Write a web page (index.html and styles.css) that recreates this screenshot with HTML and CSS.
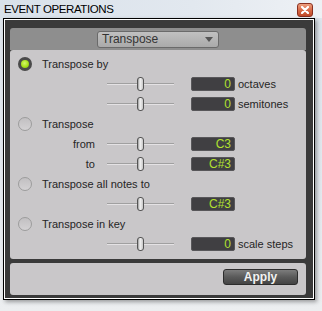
FILE: index.html
```html
<html>
<head>
	<meta http-equiv="Content-Type" content="text/html; charset=utf-8" />
	<title>Event Operations</title>
	<link rel="stylesheet" href="styles.css">
</head>
<body>
	<div class="titlebar">
		<span class="title">EVENT OPERATIONS</span>
		<span class="close">
			<svg width="8" height="8" viewBox="0 0 8 8"><path d="M1 1L7 7M7 1L1 7" stroke="#fff" stroke-width="2.2" stroke-linecap="round"/></svg>
		</span>
	</div>
	<div class="frame">
		<div class="inner">
			<div class="panel">
				<div class="panel-head">
					<div class="select">Transpose<span class="caret"></span></div>
				</div>
				<div class="panel-body">
					<div class="row opt"><span class="radio on"></span><span>Transpose by</span></div>
					<div class="row ctl"><span class="lbl"></span><span class="slider"><i class="thumb"></i></span><span class="val">0</span><span class="unit">octaves</span></div>
					<div class="row ctl"><span class="lbl"></span><span class="slider"><i class="thumb"></i></span><span class="val">0</span><span class="unit">semitones</span></div>
					<div class="row opt"><span class="radio"></span><span>Transpose</span></div>
					<div class="row ctl"><span class="lbl">from</span><span class="slider"><i class="thumb"></i></span><span class="val">C3</span></div>
					<div class="row ctl"><span class="lbl">to</span><span class="slider"><i class="thumb"></i></span><span class="val">C#3</span></div>
					<div class="row opt"><span class="radio"></span><span>Transpose all notes to</span></div>
					<div class="row ctl"><span class="lbl"></span><span class="slider"><i class="thumb"></i></span><span class="val">C#3</span></div>
					<div class="row opt"><span class="radio"></span><span>Transpose in key</span></div>
					<div class="row ctl"><span class="lbl"></span><span class="slider"><i class="thumb"></i></span><span class="val">0</span><span class="unit">scale steps</span></div>
				</div>
			</div>
			<div class="footer">
				<button class="apply">Apply</button>
			</div>
		</div>
	</div>
</body>
</html>
```

FILE: styles.css
```css
body {
	margin: 0;
	font-family: 'Liberation Sans', Arial, sans-serif;
	background: linear-gradient(to bottom, #dde4ec 0, #e3e8ee 60%, #eceef0 100%);
	height: 311px;
	overflow: hidden;
}
.titlebar {
	height: 18px;
	display: flex;
	justify-content: space-between;
	align-items: flex-start;
	background: linear-gradient(to right, #d9e1ea 0, #e2e8ef 60%, #eef1f5 100%);
}
.title {
	margin: 3px 0 0 4px;
	font-size: 11.5px;
	letter-spacing: -0.4px;
	color: #000;
}
.close {
	width: 16px;
	height: 14px;
	margin: 3px 9px 0 0;
	box-sizing: border-box;
	border: 1px solid #8a3020;
	border-radius: 3px;
	background: linear-gradient(to bottom, #eda080 0, #d86a48 50%, #c04a28 100%);
	display: flex;
	align-items: center;
	justify-content: center;
}
.frame {
	width: 312px;
	margin-left: 3px;
	box-sizing: border-box;
	border: 1px solid #000;
	box-shadow: 2px 2px 4px rgba(0, 0, 0, 0.35);
}
.inner {
	border: 1px solid #fff;
	background: #3a3a3a;
	padding: 8px 7px 3px 5px;
}
.panel-head {
	height: 22px;
	background: #8e8e8e;
	border-radius: 3px 3px 0 0;
	display: flex;
	align-items: center;
	justify-content: center;
}
.select {
	width: 122px;
	height: 17px;
	box-sizing: border-box;
	border: 1px solid #6a6a6a;
	border-radius: 3px;
	background: linear-gradient(to bottom, #c0c0c0 0, #aaaaaa 100%);
	color: #333;
	font-size: 12px;
	line-height: 15px;
	padding-left: 4px;
	display: flex;
	justify-content: space-between;
	align-items: center;
}
.caret {
	width: 0;
	height: 0;
	margin-right: 5px;
	border-left: 4px solid transparent;
	border-right: 4px solid transparent;
	border-top: 5px solid #555;
}
.panel-body {
	background: #c9c7c9;
	border-radius: 3px;
	padding: 4px 0 5px 0;
}
.row {
	height: 20px;
	display: flex;
	align-items: center;
	font-size: 11px;
	color: #252525;
}
.opt {
	padding-left: 8px;
	gap: 10px;
}
.radio {
	width: 14px;
	height: 14px;
	box-sizing: border-box;
	border-radius: 50%;
	border: 1px solid #9c9c9c;
	background: linear-gradient(to bottom, #c2c0c2, #d4d2d4);
}
.radio.on {
	border: 3px solid #4a4a4a;
	background: radial-gradient(circle at 45% 40%, #d6f56a 0, #a6e01a 55%, #7fae10 100%);
}
.lbl {
	width: 85px;
	text-align: right;
}
.slider {
	width: 67px;
	height: 20px;
	margin-left: 12px;
	display: flex;
	align-items: center;
	background: linear-gradient(to bottom, transparent 9px, #a0a0a0 9px, #a0a0a0 10px, #e4e2e4 10px, #e4e2e4 11px, transparent 11px);
}
.thumb {
	width: 7px;
	height: 14px;
	margin-left: 30px;
	box-sizing: border-box;
	border: 1px solid #555;
	border-radius: 3px;
	background: linear-gradient(to right, #9a9a9a 0, #f4f4f4 40%, #c8c8c8 100%);
}
.val {
	width: 44px;
	height: 14px;
	margin-left: 17px;
	box-sizing: border-box;
	background: #403f42;
	border: 1px solid #58575a;
	border-radius: 2px;
	color: #b2e030;
	font-size: 12px;
	line-height: 12px;
	text-align: right;
	padding-right: 3px;
}
.unit {
	margin-left: 3px;
	font-size: 11px;
}
.footer {
	margin-top: 4px;
	height: 32px;
	background: #c9c7c9;
	border-radius: 3px;
	display: flex;
	justify-content: flex-end;
	align-items: flex-start;
	padding: 6px 8px 0 0;
	box-sizing: border-box;
}
.apply {
	width: 75px;
	height: 16px;
	padding: 0;
	border: 1px solid #2c2c2c;
	border-radius: 3px;
	background: linear-gradient(to bottom, #7c7c7c 0, #5a5a5a 50%, #444 100%);
	color: #f2f2f2;
	font-family: 'Liberation Sans', Arial, sans-serif;
	font-weight: bold;
	font-size: 12px;
	line-height: 14px;
}
```
